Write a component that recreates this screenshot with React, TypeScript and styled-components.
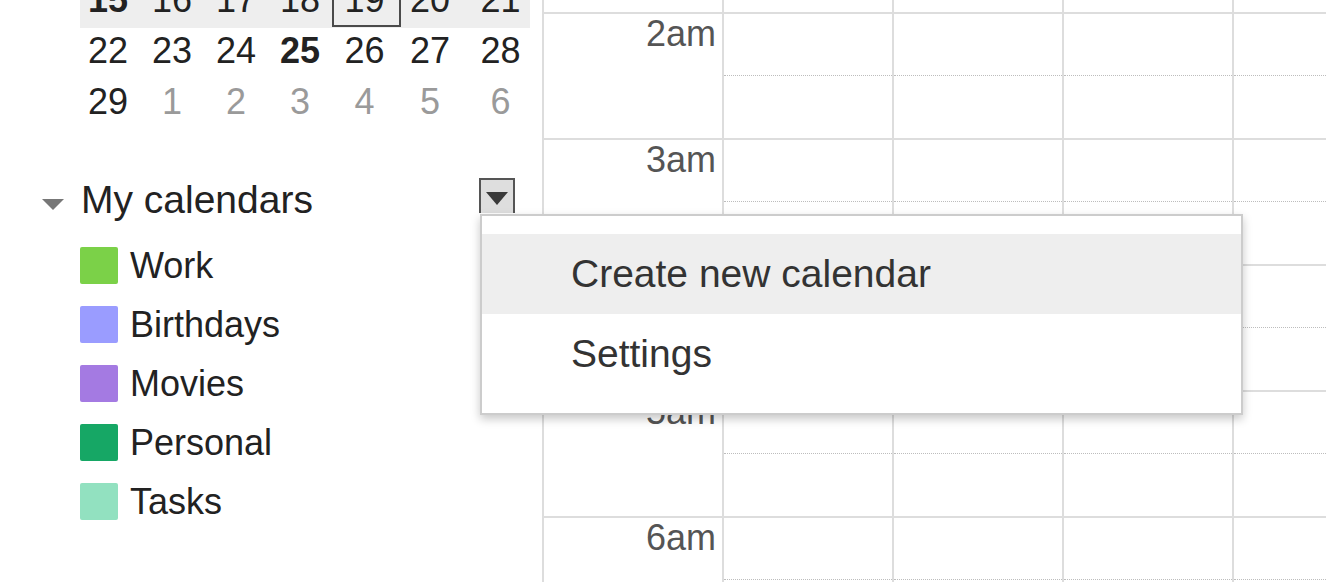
import React from 'react';
import styled, { createGlobalStyle, css } from 'styled-components';

const GlobalStyle = createGlobalStyle`
  html, body {
    margin: 0;
    padding: 0;
    background: #ffffff;
  }
  body {
    font-family: "Liberation Sans", Arial, Helvetica, sans-serif;
    overflow: hidden;
  }
  * { box-sizing: border-box; }
`;

const Page = styled.div`
  display: flex;
  width: 1326px;
  height: 582px;
  overflow: hidden;
  background: #ffffff;
`;

const Sidebar = styled.aside`
  flex: 0 0 544px;
  border-right: 2px solid #dddddd;
  position: relative;
  z-index: 2;
`;

const MiniCal = styled.div`
  margin: -23px 0 0 80px;
  width: 450px;
`;

const Week = styled.div<{ $current?: boolean }>`
  display: grid;
  grid-template-columns: 64px 64px 64px 64px 65px 66px 63px;
  height: 51px;
  background: ${(p) => (p.$current ? '#eeeeee' : 'transparent')};
`;

const Day = styled.div<{ $bold?: boolean; $muted?: boolean; $selected?: boolean }>`
  font-size: 36px;
  line-height: 46px;
  height: 51px;
  padding: 0 8px 5px 0;
  text-align: center;
  color: ${(p) => (p.$muted ? '#9a9a9a' : '#222222')};
  font-weight: ${(p) => (p.$bold ? 700 : 400)};
  &:last-child {
    padding-right: 0;
    margin-right: -4px;
  }
  ${(p) =>
    p.$selected &&
    css`
      margin-left: -4px;
      padding-left: 4px;
      height: 50px;
      box-shadow: inset 0 0 0 2px #4a4a4a;
    `}
`;

const CalendarsSection = styled.section`
  margin-top: 48px;
`;

const SectionHeader = styled.div`
  display: flex;
  align-items: flex-start;
  height: 58px;
  padding: 0 27px 0 42px;
`;

const Caret = styled.span`
  flex: none;
  width: 0;
  height: 0;
  border-left: 11px solid transparent;
  border-right: 11px solid transparent;
  border-top: 11px solid #777777;
  margin: 21px 17px 0 0;
`;

const SectionTitle = styled.h2`
  flex: 1;
  margin: 0;
  font-size: 39px;
  line-height: 44px;
  font-weight: 400;
  color: #222222;
`;

const MenuAnchor = styled.div`
  position: relative;
  width: 36px;
  height: 35px;
  flex: none;
`;

const MenuButton = styled.button`
  display: flex;
  align-items: center;
  justify-content: center;
  width: 36px;
  height: 35px;
  padding: 3px 0 0;
  margin: 0;
  background: #dedede;
  border: 2px solid #555555;
  border-bottom: none;
  cursor: pointer;
`;

const ButtonArrow = styled.span`
  width: 0;
  height: 0;
  border-left: 11px solid transparent;
  border-right: 11px solid transparent;
  border-top: 13px solid #3a3a3a;
`;

const Menu = styled.ul`
  position: absolute;
  top: calc(100% + 1px);
  left: 1px;
  width: 763px;
  margin: 0;
  padding: 18px 0 19px;
  list-style: none;
  background: #ffffff;
  border: 2px solid #cccccc;
  box-shadow: 0 4px 9px rgba(0, 0, 0, 0.22);
  z-index: 10;
`;

const MenuItem = styled.li<{ $active?: boolean }>`
  height: 80px;
  line-height: 80px;
  padding-left: 89px;
  font-size: 39px;
  color: #333333;
  white-space: nowrap;
  background: ${(p) => (p.$active ? '#eeeeee' : 'transparent')};
`;

const CalendarList = styled.ul`
  list-style: none;
  margin: 0;
  padding: 0 0 0 80px;
`;

const CalendarItem = styled.li`
  display: flex;
  align-items: center;
  gap: 12px;
  height: 59px;
  font-size: 36px;
  color: #222222;
`;

const Swatch = styled.span<{ $color: string }>`
  flex: none;
  width: 38px;
  height: 37px;
  border-radius: 2px;
  background: ${(p) => p.$color};
`;

const Schedule = styled.main`
  flex: 1;
  overflow: hidden;
  position: relative;
  z-index: 1;
`;

const Track = styled.div`
  display: flex;
  margin-top: -112px;
`;

const TimeColumn = styled.div`
  flex: 0 0 180px;
  border-right: 2px solid #dddddd;
`;

const TimeCell = styled.div`
  height: 126px;
  border-bottom: 2px solid #dddddd;
  padding: 0 6px 0 0;
  text-align: right;
  font-size: 36px;
  line-height: 40px;
  color: #555555;
`;

const DayColumn = styled.div`
  flex: 0 0 170px;
  border-right: 2px solid #dddddd;
`;

const HourCell = styled.div`
  height: 126px;
  border-bottom: 2px solid #dddddd;
`;

const HalfHour = styled.div`
  height: 62px;
  border-bottom: 1px dotted #bdbdbd;
`;

type DayInfo = { n: number; bold?: boolean; muted?: boolean; selected?: boolean };

const weeks: { current?: boolean; days: DayInfo[] }[] = [
  {
    current: true,
    days: [
      { n: 15, bold: true },
      { n: 16 },
      { n: 17 },
      { n: 18 },
      { n: 19, selected: true },
      { n: 20 },
      { n: 21 },
    ],
  },
  {
    days: [{ n: 22 }, { n: 23 }, { n: 24 }, { n: 25, bold: true }, { n: 26 }, { n: 27 }, { n: 28 }],
  },
  {
    days: [
      { n: 29 },
      { n: 1, muted: true },
      { n: 2, muted: true },
      { n: 3, muted: true },
      { n: 4, muted: true },
      { n: 5, muted: true },
      { n: 6, muted: true },
    ],
  },
];

const calendars = [
  { name: 'Work', color: '#7bd148' },
  { name: 'Birthdays', color: '#9a9cff' },
  { name: 'Movies', color: '#a47ae2' },
  { name: 'Personal', color: '#16a765' },
  { name: 'Tasks', color: '#92e1c0' },
];

const hours = ['1am', '2am', '3am', '4am', '5am', '6am'];
const dayColumns = [0, 1, 2, 3];

export default function App() {
  return (
    <>
      <GlobalStyle />
      <Page>
        <Sidebar>
          <MiniCal>
            {weeks.map((w, wi) => (
              <Week key={wi} $current={w.current}>
                {w.days.map((d) => (
                  <Day key={`${wi}-${d.n}`} $bold={d.bold} $muted={d.muted} $selected={d.selected}>
                    {d.n}
                  </Day>
                ))}
              </Week>
            ))}
          </MiniCal>

          <CalendarsSection>
            <SectionHeader>
              <Caret />
              <SectionTitle>My calendars</SectionTitle>
              <MenuAnchor>
                <MenuButton aria-label="My calendars options">
                  <ButtonArrow />
                </MenuButton>
                <Menu>
                  <MenuItem $active>Create new calendar</MenuItem>
                  <MenuItem>Settings</MenuItem>
                </Menu>
              </MenuAnchor>
            </SectionHeader>
            <CalendarList>
              {calendars.map((c) => (
                <CalendarItem key={c.name}>
                  <Swatch $color={c.color} />
                  <span>{c.name}</span>
                </CalendarItem>
              ))}
            </CalendarList>
          </CalendarsSection>
        </Sidebar>

        <Schedule>
          <Track>
            <TimeColumn>
              {hours.map((h) => (
                <TimeCell key={h}>{h}</TimeCell>
              ))}
            </TimeColumn>
            {dayColumns.map((c) => (
              <DayColumn key={c}>
                {hours.map((h) => (
                  <HourCell key={h}>
                    <HalfHour />
                  </HourCell>
                ))}
              </DayColumn>
            ))}
          </Track>
        </Schedule>
      </Page>
    </>
  );
}
